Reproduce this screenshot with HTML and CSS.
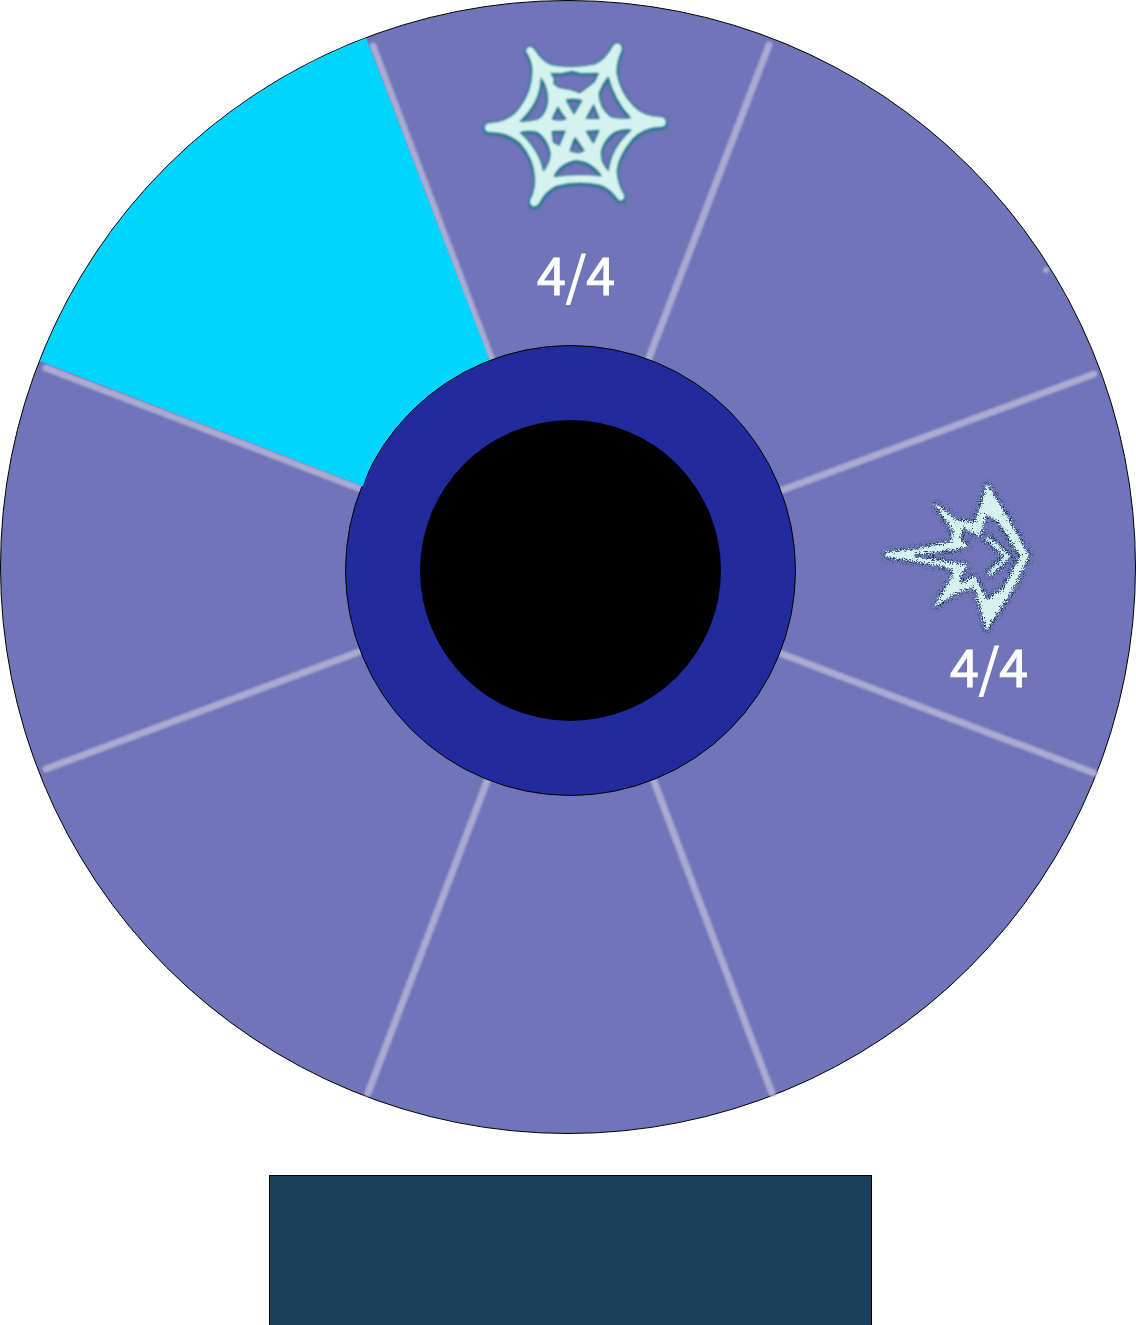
FILE: index.html
```html
<!DOCTYPE html>
<html lang="en">
<head>
<meta charset="utf-8">
<title>Ability wheel</title>
<meta name="viewport" content="width=device-width, initial-scale=1">
<link rel="stylesheet" href="styles.css">
</head>
<body>
<main class="screen">
  <svg class="wheel" viewBox="0 0 1136 1134" role="img" aria-label="Ability wheel">
    <defs>
      <filter id="soft" x="-10%" y="-10%" width="120%" height="120%" color-interpolation-filters="sRGB"><feGaussianBlur stdDeviation="1"/></filter>
      <filter id="glow" x="-10%" y="-10%" width="120%" height="120%" color-interpolation-filters="sRGB">
        <feMorphology in="SourceAlpha" operator="dilate" radius="4" result="d"/>
        <feGaussianBlur in="d" stdDeviation="5" result="b"/>
        <feOffset in="b" dx="-1" dy="2" result="o"/>
        <feFlood flood-color="#0f6f7c"/>
        <feComposite in2="o" operator="in" result="g"/>
        <feGaussianBlur in="SourceGraphic" stdDeviation="3" result="s"/>
        <feMerge><feMergeNode in="g"/><feMergeNode in="s"/></feMerge>
      </filter>
      <filter id="grain" x="-15%" y="-15%" width="130%" height="130%" color-interpolation-filters="sRGB">
        <feTurbulence type="fractalNoise" baseFrequency="0.3" numOctaves="3" seed="4" result="n"/>
        <feGaussianBlur in="SourceGraphic" stdDeviation="2" result="s"/>
        <feDisplacementMap in="s" in2="n" scale="30" xChannelSelector="R" yChannelSelector="G" result="edge"/>
        <feMorphology in="SourceAlpha" operator="dilate" radius="10" result="wide"/>
        <feGaussianBlur in="wide" stdDeviation="7" result="halo"/>
        <feColorMatrix in="n" type="matrix" values="0 0 0 0 0  0 0 0 0 0  0 0 0 0 0  0 0 24 0 -14" result="dots"/>
        <feFlood flood-color="#142c45"/>
        <feComposite in2="dots" operator="in" result="dark"/>
        <feComposite in="dark" in2="halo" operator="in" result="speckle"/>
        <feGaussianBlur in="SourceAlpha" stdDeviation="5" result="near"/>
        <feFlood flood-color="#2c6070" flood-opacity="0.8"/>
        <feComposite in2="near" operator="in" result="rim"/>
        <feMerge><feMergeNode in="rim"/><feMergeNode in="speckle"/><feMergeNode in="edge"/></feMerge>
      </filter>
    </defs>

    <ellipse class="disc" cx="568" cy="567" rx="567.5" ry="566.5"/>
    <g class="spokes" filter="url(#soft)">
      <path d="M373 46 493 363M769 45 647 363M1094 374 777 492M1094 773 777 652M772 1093 652 776M368 1093 489 776M46 769 364 650M46 368 366 491"/>
      <circle class="spark" cx="1046" cy="270" r="3"/>
    </g>
    <path class="selected" d="M366 38 490 361 480 420 420 490 363 486 40 361A567 567 0 0 1 366 38Z"/>
    <circle class="hub" cx="570.5" cy="570.5" r="225"/>
    <path class="selected" d="M361 487 363 486Q368 470 376 456L372 454Z"/>
    <circle class="hole" cx="570.5" cy="570.5" r="150.5"/>

    <svg x="470" y="30" width="210" height="190" viewBox="0 0 630 570">
      <path class="icon" fill-rule="evenodd" filter="url(#glow)" d="M168 65Q168 50 180 50 190 50 197 64 217 95 245 106 310 117 375 103 407 88 427 50 434 38 445 40 459 45 455 62 438 98 440 130 451 190 491 229 522 262 576 261 589 265 588 279 586 291 573 291 520 292 487 327 444 379 440 424 444 467 462 493 466 505 458 511 447 516 441 505 420 474 388 464 321 450 258 468 224 486 210 516 203 530 190 530 178 526 180 509 198 480 194 436 190 385 151 340 116 306 55 307 43 303 44 291 46 280 58 279 115 278 147 236 187 184 187 122 187 93 168 65Z
      M212 142Q213 216 148 275 178 276 205 268 229 254 234 214 235 170 212 142Z
      M241 130 252 146 250 162 268 174 300 179 330 190 355 171 374 156 387 129 333 130 306 123 276 130Z
      M415 139Q397 161 386 189 387 236 422 261 448 269 484 265 434 213 415 139Z
      M148 307Q207 358 220 425 242 396 242 369 232 325 202 306 177 300 148 307Z
      M486 299Q422 354 416 424 388 395 394 360 404 326 434 306 460 294 486 299Z
      M251 441Q266 402 316 391 365 393 396 439 321 430 251 441Z
      M287 209Q314 202 337 211L312 254Z
      M264 228Q271 246 290 267 267 276 245 268Z
      M371 222 347 266 389 267Z
      M245 303 287 302 268 348 249 337Z
      M347 303 389 300 370 342Z
      M315 320 344 363 325 370 299 364 306 341Z"/>
    </svg>
    <text class="count" x="576" y="295">4/4</text>

    <svg x="870" y="470" width="180" height="180" viewBox="0 0 540 540">
      <g filter="url(#grain)">
        <path class="icon" fill-rule="evenodd" d="M351 42 419 154 477 259 431 352 350 479 314 351 268 363 193 411 247 321 245 295 134 273 47 260 46 248 136 238 246 217 248 179 193 100 259 150 312 158 332 110Z
        M349 133 387 157 451 257 400 356 350 389 312 317 282 337 274 343 268 318 291 287 242 277 134 262 134 253 243 241 294 228 268 205 281 171 328 200Z"/>
        <path class="chevron" d="M350 203 412 259 357 313"/>
      </g>
    </svg>
    <text class="count" x="989" y="687">4/4</text>
  </svg>
  <section class="panel" aria-label="Details"></section>
</main>
</body>
</html>
```
FILE: styles.css
```css
body {
  margin: 0;
  background: #fff;
}

.screen {
  display: flex;
  flex-direction: column;
  align-items: center;
  gap: 41px;
}

.wheel {
  display: block;
  width: 100%;
  height: auto;
}

.disc {
  fill: #6f75b8;
  stroke: #000;
}

.spokes {
  fill: none;
  stroke: #aaaad2;
  stroke-width: 7px;
  stroke-linecap: round;
}

.spark {
  fill: #aaaad2;
  stroke: none;
}

.selected {
  fill: #00d5ff;
}

.hub {
  fill: #222b9e;
  stroke: #000;
}

.hole {
  fill: #000;
}

.icon {
  fill: #d5f2ee;
}

.chevron {
  fill: none;
  stroke: #c8eeee;
  stroke-width: 12px;
}

.count {
  fill: #fff;
  stroke: #fff;
  stroke-width: 1px;
  font-family: "Noto Sans CJK SC", "Noto Sans", sans-serif;
  font-size: 52px;
  text-anchor: middle;
}

.panel {
  box-sizing: border-box;
  width: 53%;
  height: 150px;
  margin-left: 5px;
  border: 1px solid #000;
  border-bottom: 0;
  background: #1a405a;
}
```
